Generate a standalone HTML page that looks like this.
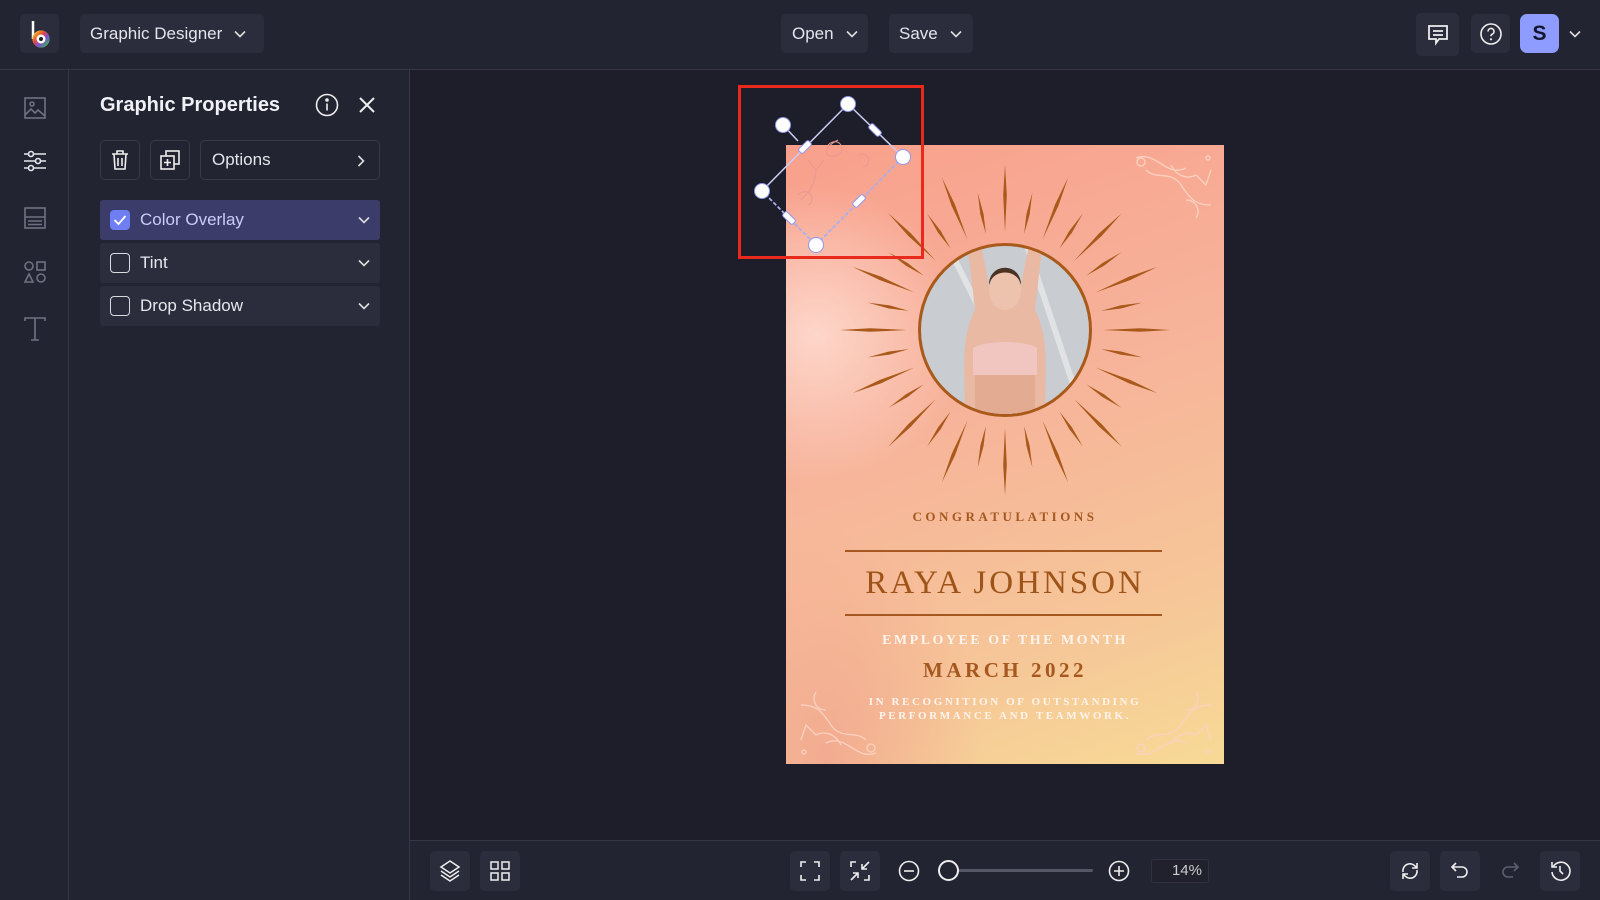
<!DOCTYPE html>
<html><head><meta charset="utf-8"><style>
*{box-sizing:border-box;margin:0;padding:0}
body{width:1600px;height:900px;background:#1d1e29;font-family:"Liberation Sans",sans-serif;color:#e6e7ee;position:relative;overflow:hidden}
.abs{position:absolute}
.top{left:0;top:0;width:1600px;height:70px;background:#232431;border-bottom:1px solid #353747}
.btn{position:absolute;background:#2c2d3c;border-radius:5px;color:#e4e5ec;font-size:17px;display:flex;align-items:center}
.rail{left:0;top:70px;width:69px;height:830px;background:#232431;border-right:1px solid #353747}
.panel{left:69px;top:70px;width:341px;height:830px;background:#232431;border-right:1px solid #353747}
.row{position:absolute;left:100px;width:280px;height:40px;background:#2c2d3c;border-radius:3px;display:flex;align-items:center;font-size:17px}
.cb{width:20px;height:20px;border:1.5px solid #d8d9e2;border-radius:4px;margin-left:10px;margin-right:10px}
.chev{position:absolute;right:10px;top:12px}
.bottom{left:410px;top:840px;width:1190px;height:60px;background:#232431;border-top:1px solid #353747}
.ib{position:absolute;top:851px;width:40px;height:40px;background:#2c2d3c;border-radius:5px;display:flex;align-items:center;justify-content:center}
svg{display:block}
.pt{position:absolute;left:0;width:438px;text-align:center;font-family:"Liberation Serif",serif;font-weight:bold}
</style></head><body>
<div class="abs top"></div>
<div class="btn" style="left:20px;top:14px;width:39px;height:39px;justify-content:center">
<svg width="26" height="30" viewBox="0 0 26 30"><defs><linearGradient id="rg" x1="0" y1="0" x2="1" y2="1"><stop offset="0" stop-color="#f5c518"/><stop offset=".35" stop-color="#e8453c"/><stop offset=".65" stop-color="#7b4fd1"/><stop offset="1" stop-color="#39b54a"/></linearGradient></defs><path d="M6 2 V20" stroke="#fff" stroke-width="2.5" fill="none"/><circle cx="14" cy="20" r="8.5" fill="#fff"/><circle cx="14" cy="20" r="6.5" fill="none" stroke="url(#rg)" stroke-width="4"/><circle cx="14" cy="20" r="2" fill="#222"/></svg></div>
<div class="btn" style="left:80px;top:14px;width:184px;height:39px;padding-left:10px">Graphic Designer<svg style="margin-left:12px" width="12" height="8" viewBox="0 0 12 8"><path d="M1 1.5l5 5 5-5" stroke="#ddd" stroke-width="1.6" fill="none"/></svg></div>
<div class="btn" style="left:781px;top:14px;width:87px;height:39px;padding-left:11px">Open<svg style="margin-left:12px" width="12" height="8" viewBox="0 0 12 8"><path d="M1 1.5l5 5 5-5" stroke="#ddd" stroke-width="1.6" fill="none"/></svg></div>
<div class="btn" style="left:889px;top:14px;width:84px;height:39px;padding-left:10px">Save<svg style="margin-left:12px" width="12" height="8" viewBox="0 0 12 8"><path d="M1 1.5l5 5 5-5" stroke="#ddd" stroke-width="1.6" fill="none"/></svg></div>
<div class="btn" style="left:1416px;top:13px;width:43px;height:43px;justify-content:center"><svg width="24" height="24" viewBox="0 0 24 24"><path d="M3 3h18v13h-8l-3 4v-4H3z" stroke="#eee" stroke-width="1.8" fill="none"/><path d="M7 8h10M7 12h10" stroke="#eee" stroke-width="1.8"/></svg></div>
<div class="btn" style="left:1471px;top:14px;width:39px;height:39px;justify-content:center"><svg width="24" height="24" viewBox="0 0 24 24"><circle cx="12" cy="12" r="10" stroke="#eee" stroke-width="1.6" fill="none"/><path d="M9 9.5a3 3 0 1 1 4 2.8c-.8.4-1 1-1 2" stroke="#eee" stroke-width="1.6" fill="none"/><circle cx="12" cy="17.3" r="1.1" fill="#eee"/></svg></div>
<div class="btn" style="left:1520px;top:14px;width:39px;height:39px;background:#8e9bff;border-radius:7px;justify-content:center;color:#13162e;font-weight:bold;font-size:21px">S</div>
<svg class="abs" style="left:1569px;top:30px" width="12" height="8" viewBox="0 0 12 8"><path d="M1 1.5l5 5 5-5" stroke="#ddd" stroke-width="1.6" fill="none"/></svg>

<div class="abs rail"></div>
<svg class="abs" style="left:23px;top:96px" width="24" height="24" viewBox="0 0 24 24" fill="none" stroke="#6f7183" stroke-width="1.6"><rect x="2" y="2" width="20" height="20"/><circle cx="9" cy="8" r="2"/><path d="M2 19l6-6 4 4 3-3 7 6"/></svg>
<svg class="abs" style="left:23px;top:150px" width="24" height="22" viewBox="0 0 24 22" fill="none" stroke="#e4e5ec" stroke-width="1.6"><path d="M1 4h22M1 11h22M1 18h22"/><circle cx="8" cy="4" r="2.5" fill="#232431"/><circle cx="15" cy="11" r="2.5" fill="#232431"/><circle cx="8" cy="18" r="2.5" fill="#232431"/></svg>
<svg class="abs" style="left:23px;top:206px" width="24" height="24" viewBox="0 0 24 24" fill="none" stroke="#6f7183" stroke-width="1.6"><rect x="2" y="2" width="20" height="20"/><path d="M2 11h20M5 15h14M5 18.5h14"/></svg>
<svg class="abs" style="left:23px;top:260px" width="24" height="24" viewBox="0 0 24 24" fill="none" stroke="#6f7183" stroke-width="1.6"><circle cx="6" cy="6" r="4"/><rect x="14" y="2" width="8" height="8"/><path d="M6 14l4 8H2z"/><circle cx="18" cy="18" r="4"/></svg>
<svg class="abs" style="left:23px;top:316px" width="24" height="26" viewBox="0 0 24 26" fill="none" stroke="#6f7183" stroke-width="1.6"><path d="M2 5V2h20v3M12 2v22M8 24h8"/></svg>

<div class="abs panel"></div>
<div class="abs" style="left:100px;top:94px;font-size:20px;font-weight:bold;color:#f0f1f6">Graphic Properties</div>
<svg class="abs" style="left:315px;top:93px" width="24" height="24" viewBox="0 0 24 24" fill="none" stroke="#eee" stroke-width="1.6"><circle cx="12" cy="12" r="10.5"/><path d="M12 10.5v7"/><circle cx="12" cy="7" r="1" fill="#eee"/></svg>
<svg class="abs" style="left:358px;top:96px" width="18" height="18" viewBox="0 0 18 18" stroke="#eee" stroke-width="2"><path d="M2 2l14 14M16 2L2 16"/></svg>
<div class="btn" style="left:100px;top:140px;width:40px;height:40px;justify-content:center;background:#232431;border:1px solid #383a4a"><svg width="20" height="22" viewBox="0 0 20 22" fill="none" stroke="#eee" stroke-width="1.6"><path d="M2 5h16M7 5V2h6v3M4 5l1 15h10l1-15M8 9v8M12 9v8"/></svg></div>
<div class="btn" style="left:150px;top:140px;width:40px;height:40px;justify-content:center;background:#232431;border:1px solid #383a4a"><svg width="22" height="22" viewBox="0 0 22 22" fill="none" stroke="#eee" stroke-width="1.6"><rect x="7" y="2" width="13" height="13"/><rect x="2" y="7" width="13" height="13" fill="#232431"/><path d="M8.5 10v7M5 13.5h7"/></svg></div>
<div class="btn" style="left:200px;top:140px;width:180px;height:40px;background:#232431;border:1px solid #383a4a;padding-left:11px">Options<svg style="position:absolute;right:14px;top:14px" width="8" height="12" viewBox="0 0 8 12"><path d="M1.5 1l5 5-5 5" stroke="#ddd" stroke-width="1.6" fill="none"/></svg></div>
<div class="row" style="top:200px;background:#3c3c6b;color:#c9ccf8"><div class="cb" style="background:#6f7ef0;border-color:#6f7ef0;display:flex;align-items:center;justify-content:center"><svg width="14" height="12" viewBox="0 0 14 12"><path d="M1.5 6l4 4 7-8" stroke="#fff" stroke-width="1.8" fill="none"/></svg></div>Color Overlay<svg class="chev" width="12" height="8" viewBox="0 0 12 8" style="top:16px"><path d="M1 1.5l5 5 5-5" stroke="#ddd" stroke-width="1.6" fill="none"/></svg></div>
<div class="row" style="top:243px"><div class="cb"></div>Tint<svg class="chev" width="12" height="8" viewBox="0 0 12 8" style="top:16px"><path d="M1 1.5l5 5 5-5" stroke="#ddd" stroke-width="1.6" fill="none"/></svg></div>
<div class="row" style="top:286px"><div class="cb"></div>Drop Shadow<svg class="chev" width="12" height="8" viewBox="0 0 12 8" style="top:16px"><path d="M1 1.5l5 5 5-5" stroke="#ddd" stroke-width="1.6" fill="none"/></svg></div>

<!-- poster -->
<div class="abs" style="left:786px;top:145px;width:438px;height:619px;background:linear-gradient(160deg,#f8a08c 0%,#f7b29a 40%,#f6c598 75%,#f7da96 100%);overflow:hidden">
<div class="abs" style="left:-120px;top:40px;width:300px;height:300px;border-radius:50%;background:radial-gradient(circle,rgba(255,225,215,.8),rgba(255,220,210,0) 70%)"></div>
<div class="abs" style="left:0;top:380px;width:200px;height:239px;background:radial-gradient(ellipse at 20% 100%,rgba(240,150,140,.6),rgba(240,150,140,0) 70%)"></div>
<svg class="abs" style="left:0;top:0" width="438" height="360" viewBox="0 0 438 360">
<defs><polygon id="L" points="98,0 135,-1.8 165,0 135,1.8" fill="#a9591a"/><polygon id="S" points="98,0 118,-1.6 140,0 118,1.6" fill="#a9591a"/></defs>
<g transform="translate(219,185)">
<use href="#L" transform="rotate(0)"/><use href="#S" transform="rotate(11.25)"/><use href="#L" transform="rotate(22.5)"/><use href="#S" transform="rotate(33.75)"/><use href="#L" transform="rotate(45)"/><use href="#S" transform="rotate(56.25)"/><use href="#L" transform="rotate(67.5)"/><use href="#S" transform="rotate(78.75)"/><use href="#L" transform="rotate(90)"/><use href="#S" transform="rotate(101.25)"/><use href="#L" transform="rotate(112.5)"/><use href="#S" transform="rotate(123.75)"/><use href="#L" transform="rotate(135)"/><use href="#S" transform="rotate(146.25)"/><use href="#L" transform="rotate(157.5)"/><use href="#S" transform="rotate(168.75)"/><use href="#L" transform="rotate(180)"/><use href="#S" transform="rotate(191.25)"/><use href="#L" transform="rotate(202.5)"/><use href="#S" transform="rotate(213.75)"/><use href="#L" transform="rotate(225)"/><use href="#S" transform="rotate(236.25)"/><use href="#L" transform="rotate(247.5)"/><use href="#S" transform="rotate(258.75)"/><use href="#L" transform="rotate(270)"/><use href="#S" transform="rotate(281.25)"/><use href="#L" transform="rotate(292.5)"/><use href="#S" transform="rotate(303.75)"/><use href="#L" transform="rotate(315)"/><use href="#S" transform="rotate(326.25)"/><use href="#L" transform="rotate(337.5)"/><use href="#S" transform="rotate(348.75)"/>
<circle r="87" fill="#a9591a"/>
<clipPath id="cc"><circle r="84"/></clipPath>
<g clip-path="url(#cc)">
<rect x="-90" y="-90" width="180" height="180" fill="#c9ccd0"/>
<path d="M-60-90L30 90M20-90L70 60" stroke="#e0e2e4" stroke-width="6" fill="none"/>
<path d="M-40 90 C-40 40 -45 10 -30 -20 L-38 -90 L-25 -90 L-12 -25 L12 -25 L25 -90 L38 -90 L30 -20 C45 10 40 40 40 90Z" fill="#e9b9a4"/>
<ellipse cx="0" cy="-40" rx="16" ry="20" fill="#eec3ad"/>
<path d="M-16 -45 C-16 -68 16 -68 16 -45 L14 -50 C8 -60 -8 -60 -14 -50Z" fill="#4a3225"/>
<path d="M-32 18 C-20 10 20 10 32 18 L32 45 L-32 45Z" fill="#f2c6c0"/>
<rect x="-30" y="45" width="60" height="50" fill="#e2ab92"/>
</g></g></svg>
<div class="pt" style="top:364px;font-size:13px;letter-spacing:3.5px;color:#a5581f">CONGRATULATIONS</div>
<div class="abs" style="left:59px;top:405px;width:317px;height:1.5px;background:#a5581f"></div>
<div class="pt" style="top:420px;font-size:33px;letter-spacing:3px;font-weight:normal;color:#9e5418">RAYA JOHNSON</div>
<div class="abs" style="left:59px;top:469px;width:317px;height:1.5px;background:#a5581f"></div>
<div class="pt" style="top:488px;font-size:14px;letter-spacing:2.5px;color:#fff4ec">EMPLOYEE OF THE MONTH</div>
<div class="pt" style="top:513px;font-size:21px;letter-spacing:3.5px;color:#a5581f">MARCH 2022</div>
<div class="pt" style="top:550px;font-size:11px;letter-spacing:2.6px;line-height:14px;color:#fff4ec">IN RECOGNITION OF OUTSTANDING<br>PERFORMANCE AND TEAMWORK.</div>
<svg class="abs" style="left:340px;top:5px" width="95" height="75" viewBox="0 0 95 75" fill="none" stroke="#fbd2c0" stroke-width="1.3"><path d="M10 8c20-8 30 20 50 10M20 20c10 10 25 0 35 15s15 20 30 20M45 15c5 10 15 15 25 10M70 25l10 10 5-15M60 50c10 0 15 10 10 18"/><circle cx="15" cy="12" r="4"/><circle cx="82" cy="8" r="2"/></svg>
<svg class="abs" style="left:5px;top:540px" width="95" height="75" viewBox="0 0 95 75" fill="none" stroke="#fbd2c0" stroke-width="1.3"><path d="M85 68c-20 8-30-20-50-10M75 55c-10-10-25 0-35-15S25 20 10 20M50 60c-5-10-15-15-25-10M25 50l-10-10-5 15M35 25c-10 0-15-10-10-18"/><circle cx="80" cy="63" r="4"/><circle cx="13" cy="67" r="2"/></svg>
<svg class="abs" style="left:340px;top:540px" width="95" height="75" viewBox="0 0 95 75" fill="none" stroke="#fbd2c0" stroke-width="1.3"><path d="M10 68c20 8 30-20 50-10M20 55c10-10 25 0 35-15s15-20 30-20M45 60c5-10 15-15 25-10M70 50l10-10 5 15M60 25c10 0 15-10 10-18"/><circle cx="15" cy="63" r="4"/><circle cx="82" cy="67" r="2"/></svg>
</div>
<!-- selection -->
<div class="abs" style="left:738px;top:85px;width:186px;height:174px;border:3px solid #e8291c"></div>
<svg class="abs" style="left:738px;top:85px" width="200" height="180" viewBox="0 0 200 180" fill="none">
<path d="M24 106 L110 19 L165 72" stroke="#c9cdf5" stroke-width="1.5"/>
<path d="M165 72 L78 160 L24 106" stroke="#a8aef0" stroke-width="1.8" stroke-dasharray="4 2"/>
<path d="M45 40 L60 56" stroke="#c9cdf5" stroke-width="1.5"/>
<g stroke="#8f97ea" stroke-width="1" fill="#fff">
<rect x="-7" y="-3" width="14" height="6" rx="2" transform="translate(67 62) rotate(-45)"/>
<rect x="-7" y="-3" width="14" height="6" rx="2" transform="translate(137 45) rotate(45)"/>
<rect x="-7" y="-3" width="14" height="6" rx="2" transform="translate(121 116) rotate(-45)"/>
<rect x="-7" y="-3" width="14" height="6" rx="2" transform="translate(51 133) rotate(45)"/>
<circle cx="45" cy="40" r="7.5"/><circle cx="110" cy="19" r="7.5"/><circle cx="165" cy="72" r="7.5"/><circle cx="24" cy="106" r="7.5"/><circle cx="78" cy="160" r="7.5"/>
</g>
<path d="M90 60c10-10 20 5 10 10s-20-5 0-15M60 110c10-10 20 5 10 10M120 70c10-5 15 10 5 12M70 75l8 10 8-10M78 85c0 15-10 25-15 30" stroke="#e79a92" stroke-width="1"/>
</svg>

<!-- bottom -->
<div class="abs bottom"></div>
<div class="ib" style="left:430px"><svg width="22" height="24" viewBox="0 0 22 24" fill="none" stroke="#eee" stroke-width="1.5"><path d="M11 2l9 6-9 6-9-6z"/><path d="M2 12l9 6 9-6M2 16l9 6 9-6"/></svg></div>
<div class="ib" style="left:480px"><svg width="20" height="20" viewBox="0 0 20 20" fill="none" stroke="#eee" stroke-width="1.5"><rect x="1" y="1" width="7" height="7"/><rect x="12" y="1" width="7" height="7"/><rect x="1" y="12" width="7" height="7"/><rect x="12" y="12" width="7" height="7"/></svg></div>
<div class="ib" style="left:790px"><svg width="20" height="20" viewBox="0 0 20 20" fill="none" stroke="#eee" stroke-width="1.6"><path d="M1 6V1h5M14 1h5v5M19 14v5h-5M6 19H1v-5"/></svg></div>
<div class="ib" style="left:840px"><svg width="20" height="20" viewBox="0 0 20 20" fill="none" stroke="#eee" stroke-width="1.6"><path d="M1 6V1h5M19 14v5h-5M19 1l-7 7M12 3v5h5M1 19l7-7M3 12h5v5"/></svg></div>
<svg class="abs" style="left:898px;top:860px" width="22" height="22" viewBox="0 0 22 22" fill="none" stroke="#eee" stroke-width="1.6"><circle cx="11" cy="11" r="9.5"/><path d="M6 11h10"/></svg>
<div class="abs" style="left:948px;top:869px;width:145px;height:3px;background:#56586a;border-radius:2px"></div>
<div class="abs" style="left:938px;top:860px;width:21px;height:21px;border-radius:50%;border:2px solid #eee;background:#232431"></div>
<svg class="abs" style="left:1108px;top:860px" width="22" height="22" viewBox="0 0 22 22" fill="none" stroke="#eee" stroke-width="1.6"><circle cx="11" cy="11" r="9.5"/><path d="M6 11h10M11 6v10"/></svg>
<div class="abs" style="left:1151px;top:859px;width:58px;height:24px;border:1px solid #303242;border-radius:3px;background:#20212d;color:#ccc;font-size:15px;text-align:right;padding-right:6px;line-height:22px">14%</div>
<div class="ib" style="left:1390px"><svg width="22" height="22" viewBox="0 0 22 22" fill="none" stroke="#eee" stroke-width="1.6"><path d="M4 12a7 7 0 0 1 12-6l2 2M18 10a7 7 0 0 1-12 6l-2-2M18 3v5h-5M4 19v-5h5"/></svg></div>
<div class="ib" style="left:1440px"><svg width="22" height="22" viewBox="0 0 22 22" fill="none" stroke="#eee" stroke-width="1.6"><path d="M7 3L3 7l4 4M3 7h10a5 5 0 0 1 0 10H8"/></svg></div>
<div class="ib" style="left:1490px;background:#232431"><svg width="22" height="22" viewBox="0 0 22 22" fill="none" stroke="#5c5e70" stroke-width="1.6"><path d="M15 3l4 4-4 4M19 7H9a5 5 0 0 0 0 10h5"/></svg></div>
<div class="ib" style="left:1540px"><svg width="22" height="22" viewBox="0 0 22 22" fill="none" stroke="#eee" stroke-width="1.6"><path d="M4 7a9 9 0 1 1-1 5M3 2v5h5M11 6v5l3 3"/></svg></div>
</body></html>
